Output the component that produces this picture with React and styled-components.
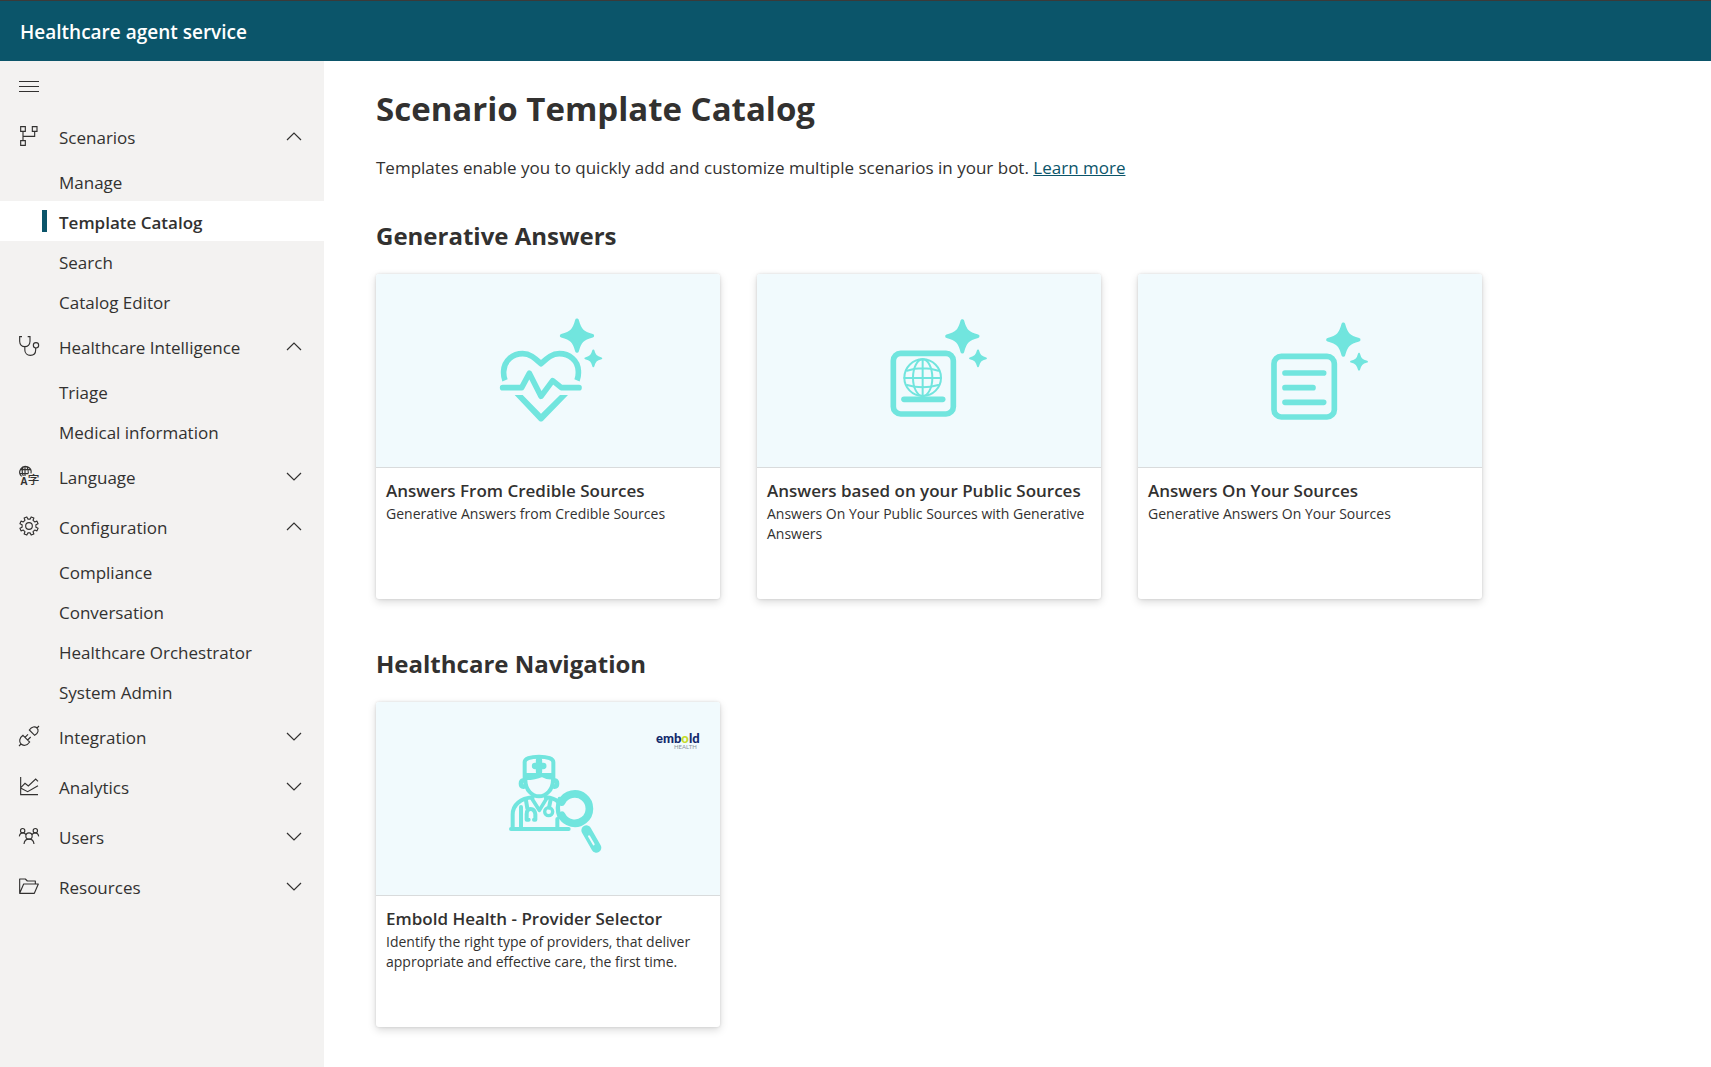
import React, { useState } from 'react';
import styled, { createGlobalStyle } from 'styled-components';

const GlobalStyle = createGlobalStyle`
  * {
    box-sizing: border-box;
  }
  body {
    margin: 0;
    background: #ffffff;
    color: #323130;
    font-family: 'Segoe UI', 'Open Sans', 'Noto Sans', sans-serif;
    font-size: 17px;
  }
`;

const Page = styled.div`
  display: flex;
  flex-direction: column;
  min-height: 100vh;
`;

const Header = styled.header`
  display: flex;
  align-items: center;
  height: 61px;
  padding: 2px 20px 0;
  border-top: 1px solid #3b3a39;
  background: #0b556a;
  color: #ffffff;
  font-size: 19px;
  font-weight: 600;
`;

const Body = styled.div`
  display: flex;
  flex: 1;
`;

const Sidebar = styled.nav`
  flex: 0 0 324px;
  background: #f3f2f1;
`;

const MenuButton = styled.button`
  display: flex;
  align-items: center;
  width: 100%;
  height: 50px;
  padding: 0 19px;
  border: 0;
  background: none;
  color: #323130;
  cursor: pointer;
`;

const SectionButton = styled.button`
  display: flex;
  align-items: center;
  gap: 20px;
  width: 100%;
  height: 50px;
  padding: 0 22px 0 19px;
  border: 0;
  background: none;
  color: #323130;
  font: inherit;
  text-align: left;
  cursor: pointer;
`;

const SectionLabel = styled.span`
  flex: 1;
  padding-top: 2px;
`;

const SubList = styled.ul`
  margin: 0;
  padding: 0;
  list-style: none;
`;

const SubLink = styled.a`
  display: flex;
  align-items: center;
  height: 40px;
  padding-top: 2px;
  padding-left: ${({ $active }) => ($active ? '42px' : '59px')};
  background: ${({ $active }) => ($active ? '#ffffff' : 'transparent')};
  color: #323130;
  font-weight: ${({ $active }) => ($active ? 600 : 400)};
  text-decoration: none;

  &::before {
    content: '';
    display: ${({ $active }) => ($active ? 'block' : 'none')};
    width: 5px;
    height: 22px;
    margin-right: 12px;
    margin-bottom: 2px;
    background: #0b556a;
  }
`;

const Main = styled.main`
  flex: 1;
  min-width: 0;
  padding: 23px 52px 39px;
`;

const Title = styled.h1`
  margin: 0;
  font-size: 33px;
  line-height: 50px;
  font-weight: 700;
`;

const Intro = styled.p`
  margin: 21px 0 0;
  line-height: 26px;
`;

const Link = styled.a`
  color: #0b556a;
`;

const Group = styled.section`
  margin-top: ${({ $first }) => ($first ? '37px' : '47px')};
`;

const GroupTitle = styled.h2`
  margin: 0 0 20px;
  font-size: 24px;
  line-height: 36px;
  font-weight: 700;
`;

const Cards = styled.div`
  display: flex;
  flex-wrap: wrap;
  gap: 37px;
`;

const Card = styled.article`
  width: 344px;
  min-height: 325px;
  border-radius: 3px;
  background: #ffffff;
  box-shadow: 0 3px 8px rgba(0, 0, 0, 0.15), 0 0 3px rgba(0, 0, 0, 0.12);
  overflow: hidden;
`;

const Cover = styled.div`
  position: relative;
  display: flex;
  align-items: center;
  justify-content: center;
  height: 194px;
  border-bottom: 1px solid #d9dbdc;
  background: #f1fafd;
`;

const CardText = styled.div`
  padding: 10px;
`;

const CardTitle = styled.h3`
  margin: 0;
  font-size: 17px;
  line-height: 26px;
  font-weight: 600;
`;

const CardDescription = styled.p`
  margin: 0;
  font-size: 14px;
  line-height: 20px;
`;

const BrandLogo = styled.svg`
  position: absolute;
  top: 28px;
  right: 19px;
`;

const IconSvg = styled.svg`
  flex: none;
  overflow: visible;
`;

const Icon = ({ children }) => (
  <IconSvg width="20" height="20" viewBox="0 0 60 60" fill="none" stroke="currentColor" strokeWidth="3.4" aria-hidden="true">
    {children}
  </IconSvg>
);

const gearPath = () => {
  const points = [];
  for (let i = 0; i < 8; i += 1) {
    const center = 22.5 + i * 45;
    [[-13, 21], [-9, 28], [9, 28], [13, 21]].forEach(([offset, radius]) => {
      const angle = ((center + offset) * Math.PI) / 180;
      points.push(`${(30 + radius * Math.cos(angle)).toFixed(1)} ${(30 + radius * Math.sin(angle)).toFixed(1)}`);
    });
  }
  return `M${points.join('L')}Z`;
};

const MenuIcon = () => (
  <svg width="20" height="20" viewBox="0 0 20 20" stroke="currentColor" aria-hidden="true">
    <path d="M0 5.5H20M0 10.5H20M0 15.5H20" />
  </svg>
);

const ScenariosIcon = () => (
  <Icon>
    <path d="M5 2H19V16H5ZM40 2H54V16H40ZM5 44H19V58H5ZM12 16V44M12 31H47V16" />
  </Icon>
);

const StethoscopeIcon = () => (
  <Icon>
    <path d="M9 2H2V16C2 26 9 32 17.500 32S33 26 33 16V2H26M17.500 32V42C17.500 52 25 58 34 58S50 52 50 42V36" />
    <circle cx="51" cy="28" r="8" />
  </Icon>
);

const LanguageIcon = () => (
  <Icon>
    <path d="M36 22A17 17 0 1 0 8 31M3 11H34M2 23H28M18 1V30M13 2Q6 16 13 30M23 2Q29 10 28 22" />
    <text x="4" y="58" fill="currentColor" stroke="none" fontFamily="Liberation Sans" fontWeight="700" fontSize="31">A</text>
    <text x="26" y="54" fill="currentColor" stroke="none" fontFamily="Noto Sans CJK SC" fontWeight="500" fontSize="35">字</text>
  </Icon>
);

const GearIcon = () => (
  <Icon>
    <path d={gearPath()} strokeLinejoin="round" />
    <circle cx="30" cy="30" r="10" />
  </Icon>
);

const PlugIcon = () => (
  <Icon>
    <path d="M60 0L54 6M31 12L47 28C58 22 60 12 54 6C48 0 38 2 31 12ZM0 60L6 54M12 28L32 48C24 60 12 60 6 54C0 48 0 36 12 28ZM18 34L27 25M26 42L35 33" />
  </Icon>
);

const AnalyticsIcon = () => (
  <Icon>
    <path d="M5 3V56H57M6 34L18 22L28 30L50 9L57 16M6 37L26 47L57 29" />
  </Icon>
);

const UsersIcon = () => (
  <Icon>
    <circle cx="11" cy="14" r="6.500" />
    <circle cx="49" cy="14" r="6.500" />
    <circle cx="30" cy="30" r="9.500" />
    <path d="M1 31C2 23 7 20.500 12 20.500C16 20.500 19 22 21 26M59 31C58 23 53 20.500 48 20.500C44 20.500 41 22 39 26M15 54C16 44 22 39.500 30 39.500S44 44 45 54" />
  </Icon>
);

const FolderIcon = () => (
  <Icon>
    <path d="M2 52V9H19L25 15H49V24M2 52L14 24H58L46 52Z" strokeLinejoin="round" />
  </Icon>
);

const Chevron = ({ open }) => (
  <svg width="16" height="16" viewBox="0 0 16 16" fill="none" stroke="currentColor" strokeWidth="1.2" aria-hidden="true">
    <path d={open ? 'M1 12L8 5L15 12' : 'M1 5L8 12L15 5'} />
  </svg>
);

const Art = ({ viewBox, children }) => (
  <svg width="140" height="140" viewBox={viewBox} fill="none" stroke="#71e5de" strokeWidth="17" strokeLinecap="round" strokeLinejoin="round" aria-hidden="true">
    {children}
  </svg>
);

const Sparkle = ({ x, y, scale = 1 }) => (
  <path
    transform={`translate(${x} ${y}) scale(${scale})`}
    d="M0-46C8-16 16-8 46 0C16 8 8 16 0 46C-8 16-16 8-46 0C-16-8-8-16 0-46Z"
    fill="#71e5de"
    strokeWidth="11"
  />
);

const HeartArt = () => (
  <Art viewBox="-4 2 420 420">
    <path d="M77 240Q72 228 73 212C75 180 100 160 130 160C152 160 165 172 185 190C205 172 218 160 240 160C270 160 296 180 297 212Q298 228 293 240" strokeLinecap="butt" />
    <path d="M70 262H127L150 219L185 288L220 241L246 262H299" />
    <path d="M106 284H130L185 340L242 284H266L191 361Q185 366 179 361Z" fill="#71e5de" stroke="none" />
    <Sparkle x={293} y={106} />
    <Sparkle x={342} y={174} scale={0.52} />
  </Art>
);

const GlobeArt = () => (
  <Art viewBox="-30 2 420 420">
    <rect x="73" y="159" width="180" height="182" rx="22" />
    <g strokeWidth="6">
      <circle cx="161" cy="232" r="55" />
      <ellipse cx="161" cy="232" rx="29" ry="55" />
      <path d="M161 177V287M106 233H216M114 211Q161 197 208 211M114 254Q161 268 208 254" />
    </g>
    <path d="M105 297H221" />
    <Sparkle x={280} y={108} />
    <Sparkle x={327} y={174} scale={0.52} />
  </Art>
);

const DocumentArt = () => (
  <Art viewBox="-27 2 420 420">
    <rect x="75" y="168" width="181" height="182" rx="22" />
    <path d="M108 218H224M108 262H192M108 306H224" />
    <Sparkle x={283} y={118} />
    <Sparkle x={330} y={184} scale={0.52} />
  </Art>
);

const DoctorArt = () => (
  <Art viewBox="-34 28 420 420">
    <g strokeWidth="12">
      <path d="M106 178V127C106 118 122 111 149 111S192 118 192 127V178" />
      <path d="M110 163H188V176Q176 178 158 169Q138 178 110 178Z" fill="#71e5de" strokeWidth="6" />
      <path d="M149 122V156M137 139H162" strokeWidth="19" />
      <path d="M108 180C108 212 129 230 149 230S191 212 191 180" />
      <path d="M101 183Q95 184 95 192T103 201M197 183Q203 184 203 192T195 201" strokeWidth="14" />
      <path d="M70 326V285C70 255 94 236 130 233M169 233Q195 235 207 247" />
      <path d="M65 328H238M95 326V262M204 326V298" />
      <path d="M127 236L150 272L172 236" strokeWidth="11" />
      <path d="M110 242L114 266M112 300V284Q112 268 124 268T138 284V300M112 300H118M138 300H134M184 240L179 264" strokeWidth="12" />
      <circle cx="178" cy="276" r="12" strokeWidth="10" />
    </g>
    <path d="M217 247A44 44 0 1 1 217 287" strokeWidth="23" />
    <path d="M211 238Q200 266 211 292" strokeWidth="13" />
    <path d="M291 332L321 384" strokeWidth="30" />
    <path d="M299 350L313 374" stroke="#f1fafd" strokeWidth="6" />
  </Art>
);

const EmboldLogo = () => (
  <BrandLogo width="48" height="24" viewBox="0 0 48 24" role="img" aria-label="embold health">
    <text x="3" y="13" fontFamily="Lato" fontWeight="900" fontSize="13" fill="#12296b">
      emb<tspan fill="#c5dc2c">o</tspan>ld
    </text>
    <text x="21" y="19" fontFamily="Lato" fontSize="6" fill="#8a929c">HEALTH</text>
  </BrandLogo>
);

const sections = [
  { name: 'Scenarios', icon: ScenariosIcon, items: ['Manage', 'Template Catalog', 'Search', 'Catalog Editor'] },
  { name: 'Healthcare Intelligence', icon: StethoscopeIcon, items: ['Triage', 'Medical information'] },
  { name: 'Language', icon: LanguageIcon, items: [] },
  { name: 'Configuration', icon: GearIcon, items: ['Compliance', 'Conversation', 'Healthcare Orchestrator', 'System Admin'] },
  { name: 'Integration', icon: PlugIcon, items: [] },
  { name: 'Analytics', icon: AnalyticsIcon, items: [] },
  { name: 'Users', icon: UsersIcon, items: [] },
  { name: 'Resources', icon: FolderIcon, items: [] },
];

const groups = [
  {
    title: 'Generative Answers',
    cards: [
      { title: 'Answers From Credible Sources', text: 'Generative Answers from Credible Sources', art: HeartArt },
      { title: 'Answers based on your Public Sources', text: 'Answers On Your Public Sources with Generative Answers', art: GlobeArt },
      { title: 'Answers On Your Sources', text: 'Generative Answers On Your Sources', art: DocumentArt },
    ],
  },
  {
    title: 'Healthcare Navigation',
    cards: [
      {
        title: 'Embold Health - Provider Selector',
        text: 'Identify the right type of providers, that deliver appropriate and effective care, the first time.',
        art: DoctorArt,
        logo: EmboldLogo,
      },
    ],
  },
];

const NavSection = ({ section }) => {
  const [open, setOpen] = useState(section.items.length > 0);
  const SectionIcon = section.icon;

  return (
    <div>
      <SectionButton type="button" aria-expanded={open} onClick={() => setOpen(!open)}>
        <SectionIcon />
        <SectionLabel>{section.name}</SectionLabel>
        <Chevron open={open} />
      </SectionButton>
      {open && section.items.length > 0 && (
        <SubList>
          {section.items.map((item) => (
            <li key={item}>
              <SubLink href="#" $active={item === 'Template Catalog'}>{item}</SubLink>
            </li>
          ))}
        </SubList>
      )}
    </div>
  );
};

const TemplateCard = ({ card }) => {
  const CardArt = card.art;
  const Logo = card.logo;

  return (
    <Card>
      <Cover>
        <CardArt />
        {Logo && <Logo />}
      </Cover>
      <CardText>
        <CardTitle>{card.title}</CardTitle>
        <CardDescription>{card.text}</CardDescription>
      </CardText>
    </Card>
  );
};

const App = () => (
  <Page>
    <GlobalStyle />
    <Header>Healthcare agent service</Header>
    <Body>
      <Sidebar>
        <MenuButton type="button" aria-label="Toggle navigation">
          <MenuIcon />
        </MenuButton>
        {sections.map((section) => (
          <NavSection key={section.name} section={section} />
        ))}
      </Sidebar>
      <Main>
        <Title>Scenario Template Catalog</Title>
        <Intro>
          Templates enable you to quickly add and customize multiple scenarios in your bot. <Link href="#">Learn more</Link>
        </Intro>
        {groups.map((group, index) => (
          <Group key={group.title} $first={index === 0}>
            <GroupTitle>{group.title}</GroupTitle>
            <Cards>
              {group.cards.map((card) => (
                <TemplateCard key={card.title} card={card} />
              ))}
            </Cards>
          </Group>
        ))}
      </Main>
    </Body>
  </Page>
);

export default App;
